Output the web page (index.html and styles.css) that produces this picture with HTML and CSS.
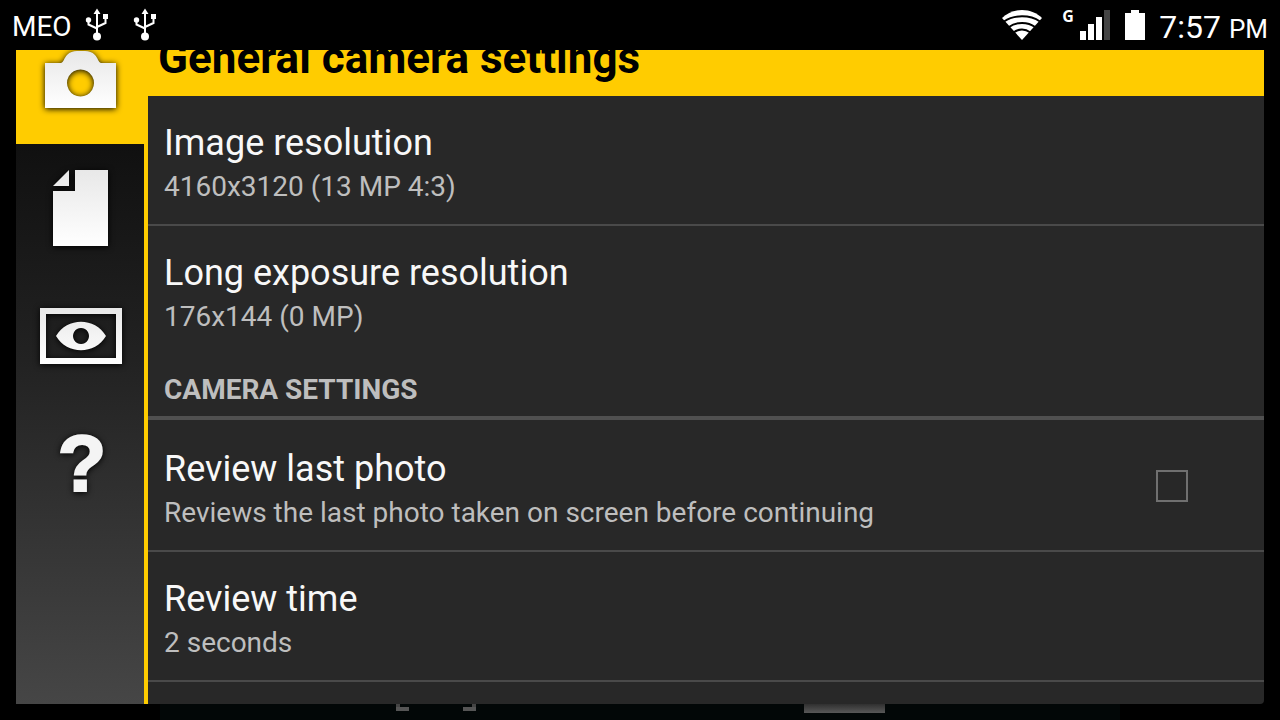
FILE: index.html
```html
<!DOCTYPE html>
<html lang="en">
<head>
<meta charset="utf-8">
<meta name="viewport" content="width=device-width, initial-scale=1">
<title>General camera settings</title>
<link rel="stylesheet" href="styles.css">
</head>
<body>
<svg class="defs" width="0" height="0" aria-hidden="true">
  <defs>
    <linearGradient id="sheen" x1="0" y1="0" x2="0" y2="1">
      <stop offset="0" stop-color="#e8e8e8"/>
      <stop offset="1" stop-color="#ffffff"/>
    </linearGradient>
    <symbol id="usb" viewBox="0 0 24 34">
      <g fill="none" stroke="#fff" stroke-width="2">
        <path d="M12 5V28M3.500 12V16.500L12 20.500M20.500 9V15L12 19"/>
      </g>
      <path fill="#fff" d="M12 0.500L15.500 6H8.500ZM18 6h5v5h-5z"/>
      <circle cx="3.500" cy="12" r="2.700" fill="#fff"/>
      <circle cx="12" cy="28.500" r="4" fill="#fff"/>
    </symbol>
  </defs>
</svg>

<header class="status">
  <span class="carrier">MEO</span>
  <svg class="usb" role="img" aria-label="USB connected"><use href="#usb"/></svg>
  <svg class="usb" role="img" aria-label="USB debugging"><use href="#usb"/></svg>
  <div class="status-end">
    <svg class="wifi" viewBox="0 0 40 30" role="img" aria-label="Wi-Fi">
      <path fill="#fff" d="M20 0C12 0 5 3 0 8L20 30L40 8C35 3 28 0 20 0Z"/>
      <g fill="none" stroke="#000" stroke-width="2">
        <path d="M2 11.500C12 4.500 28 4.500 38 11.500M7 17C14 11.500 26 11.500 33 17M11.500 22.500C17 18.500 23 18.500 28.500 22.500"/>
      </g>
    </svg>
    <span class="network">G</span>
    <svg class="signal" viewBox="0 0 30 30" role="img" aria-label="Signal strength">
      <path fill="#fff" d="M0 21h6v9H0zM8 14h6v16H8zM16 7h6v23h-6z"/>
      <path fill="#444" d="M24 0h6v30h-6z"/>
    </svg>
    <svg class="battery" viewBox="0 0 20 30" role="img" aria-label="Battery full">
      <path fill="#fff" d="M6 0h8v3h6v27H0V3h6z"/>
    </svg>
    <time class="clock">7:57 <span class="meridiem">PM</span></time>
  </div>
</header>

<main class="dialog">
  <nav class="tabs" aria-label="Settings sections">
    <button class="tab tab-active" type="button" aria-label="Camera">
      <svg class="tab-icon" viewBox="0 0 96 96">
        <path fill="url(#sheen)" fill-rule="evenodd" d="M13 31H29C32 30 32 26 35 23C38 20 41 19 45 19H53C57 19 60 20 63 23C66 26 66 30 69 31H84V76H13ZM48.500 37.500a13.500 13.500 0 1 0 0.010 0Z"/>
      </svg>
    </button>
    <button class="tab" type="button" aria-label="File">
      <svg class="tab-icon" viewBox="0 0 96 96">
        <path fill="url(#sheen)" d="M43 10H76V86H21V31H43ZM37 10V26H21Z"/>
      </svg>
    </button>
    <button class="tab" type="button" aria-label="Display">
      <svg class="tab-icon" viewBox="0 0 96 96">
        <path fill="url(#sheen)" fill-rule="evenodd" d="M8 20H90V76H8ZM14 26V70H84V26ZM24 48C35 29 63 29 74 48C63 67 35 67 24 48ZM49 40a8 8 0 1 0 0.010 0Z"/>
      </svg>
    </button>
    <button class="tab" type="button" aria-label="Help"><span class="help">?</span></button>
  </nav>

  <section class="panel">
    <h1 class="heading">General camera settings</h1>
    <button class="row" type="button">
      <span class="title">Image resolution</span>
      <span class="summary">4160x3120 (13 MP 4:3)</span>
    </button>
    <button class="row row-last" type="button">
      <span class="title">Long exposure resolution</span>
      <span class="summary">176x144 (0 MP)</span>
    </button>
    <h2 class="category">CAMERA SETTINGS</h2>
    <div class="row row-check">
      <label class="row-text" for="review">
        <span class="title">Review last photo</span>
        <span class="summary">Reviews the last photo taken on screen before continuing</span>
      </label>
      <input class="check" id="review" type="checkbox">
    </div>
    <button class="row" type="button">
      <span class="title">Review time</span>
      <span class="summary">2 seconds</span>
    </button>
  </section>
</main>

<footer class="viewfinder" aria-hidden="true">
  <div class="preview">
    <span class="focus"></span>
    <span class="thumb"></span>
  </div>
</footer>
</body>
</html>
```
FILE: styles.css
```css
* {
  box-sizing: border-box;
}

body {
  margin: 0;
  height: 100vh;
  padding-top: 16px;
  display: flex;
  flex-direction: column;
  overflow: hidden;
  background: #000;
  color: #f8f8f8;
  font-family: Roboto, "Noto Sans", sans-serif;
}

button {
  margin: 0;
  border: 0;
  background: none;
  color: inherit;
  font: inherit;
  text-align: left;
}

.defs {
  position: absolute;
}

/* System bar, drawn over the top of the dialog */
.status {
  position: absolute;
  z-index: 1;
  top: 0;
  left: 0;
  right: 0;
  height: 50px;
  padding: 0 12px;
  display: flex;
  align-items: center;
  background: #000;
  color: #fff;
}

.carrier {
  width: 73px;
  padding-top: 4px;
  font-size: 28px;
  line-height: 32px;
}

.usb {
  width: 24px;
  height: 34px;
  margin-right: 24px;
}

.status-end {
  margin-left: auto;
  display: flex;
  align-items: center;
}

.wifi {
  width: 40px;
  height: 30px;
  margin-right: 20px;
}

.network {
  align-self: flex-start;
  width: 18px;
  font-family: "Noto Sans", sans-serif;
  font-size: 16px;
  font-weight: 700;
  line-height: 30px;
}

.signal {
  width: 30px;
  height: 30px;
  margin-right: 15px;
}

.battery {
  width: 20px;
  height: 30px;
  margin-right: 14px;
}

.clock {
  padding-top: 6px;
  font-size: 32px;
  line-height: 40px;
}

.meridiem {
  font-size: 26px;
}

.dialog {
  flex: 1;
  min-height: 0;
  margin: 0 16px;
  display: flex;
  overflow: hidden;
  border-radius: 0 0 4px 0;
  background: #282828;
}

.tabs {
  flex: none;
  width: 132px;
  border-right: 4px solid #fc0;
  background: linear-gradient(#050505, #111 20%, #222 50%, #464646);
}

.tab {
  width: 100%;
  height: 128px;
  padding: 0;
  display: flex;
  align-items: center;
  justify-content: center;
}

.tab-active {
  background: #fc0;
}

.tab-icon {
  width: 96px;
  height: 96px;
  overflow: visible;
  filter: drop-shadow(0 1px 3px #000);
}

.help {
  padding-left: 4px;
  font-family: "Liberation Sans", sans-serif;
  font-size: 80px;
  font-weight: 700;
  line-height: 96px;
  color: #f4f4f4;
  -webkit-text-stroke: 2px #f4f4f4;
  filter: drop-shadow(0 1px 3px #000);
}

.panel {
  flex: 1;
  min-width: 0;
}

.heading {
  margin: 0;
  padding: 22px 10px 18px;
  background: #fc0;
  color: #000;
  font-size: 44px;
  font-weight: 700;
  line-height: 40px;
}

.row {
  width: 100%;
  padding: 24px 16px 16px;
  display: block;
  border-bottom: 2px solid #4a4a4a;
}

.row-last {
  border-bottom-color: transparent;
}

.title,
.summary {
  display: block;
}

.title {
  font-size: 36px;
  line-height: 46px;
}

.summary {
  color: #bebebe;
  font-size: 28px;
  line-height: 42px;
}

.category {
  margin: 0 0 2px;
  padding: 15px 16px 7px;
  border-bottom: 4px solid #505050;
  color: #bebebe;
  font-size: 28px;
  font-weight: 700;
  line-height: 38px;
}

.row-check {
  display: flex;
  align-items: center;
}

.row-text {
  flex: 1;
}

.check {
  appearance: none;
  width: 32px;
  height: 32px;
  margin: 0 60px 8px 0;
  border: 2px solid #707070;
  background: transparent;
}

/* Strip of the camera view left visible under the dialog */
.viewfinder {
  flex: none;
  height: 16px;
  padding: 0 12.5%;
}

.preview {
  height: 100%;
  padding: 0 235px 0 236px;
  display: flex;
  justify-content: space-between;
  background: #020707;
}

.focus {
  width: 80px;
  height: 7px;
  background:
    linear-gradient(#555, #555) left bottom / 13px 4px no-repeat,
    linear-gradient(#555, #555) right bottom / 13px 4px no-repeat,
    linear-gradient(#444, #444) left top / 4px 7px no-repeat,
    linear-gradient(#444, #444) right top / 4px 7px no-repeat;
}

.thumb {
  width: 81px;
  height: 9px;
  background: linear-gradient(#303030, #585858);
}
```
